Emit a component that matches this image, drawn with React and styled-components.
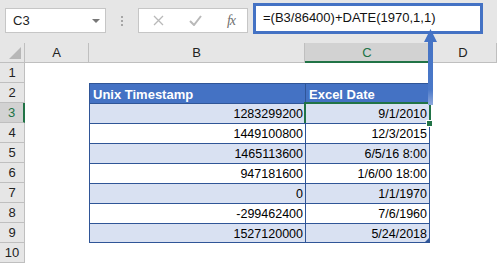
import React from "react";
import styled, { createGlobalStyle, css } from "styled-components";

const GlobalStyle = createGlobalStyle`
  body {
    margin: 0;
    background: #ffffff;
    font-family: "Liberation Sans", Arial, sans-serif;
    overflow: hidden;
  }
`;

const Page = styled.div`
  position: relative;
  width: 497px;
  height: 265px;
  overflow: hidden;
  background: #fff;
`;

const TopBar = styled.div`
  display: flex;
  align-items: flex-start;
  height: 43px;
  background: #e6e6e6;
`;

const NameBox = styled.div`
  display: flex;
  align-items: center;
  justify-content: space-between;
  box-sizing: border-box;
  width: 101px;
  height: 25px;
  margin: 8px 0 0 5px;
  padding: 0 5px 0 7px;
  background: #fff;
  border: 1px solid #c6c6c6;
  font-size: 13px;
  color: #222;
`;

const DropArrow = styled.span`
  width: 0;
  height: 0;
  border-left: 4px solid transparent;
  border-right: 4px solid transparent;
  border-top: 4px solid #777;
`;

const Dots = styled.div`
  display: flex;
  flex-direction: column;
  gap: 2px;
  margin: 16px 0 0 15px;
  span {
    width: 2px;
    height: 2px;
    background: #a6a6a6;
  }
`;

const FuncBox = styled.div`
  display: flex;
  align-items: center;
  justify-content: space-between;
  box-sizing: border-box;
  width: 110px;
  height: 25px;
  margin: 8px 0 0 15px;
  padding: 0 12px 0 14px;
  background: #fff;
  border: 1px solid #c6c6c6;
`;

const Fx = styled.span`
  font-family: "Liberation Serif", "Times New Roman", serif;
  font-style: italic;
  font-size: 14px;
  color: #6f6f6f;
  letter-spacing: -1px;
`;

const FormulaInput = styled.div`
  box-sizing: border-box;
  width: 230px;
  height: 31px;
  margin: 3px 0 0 5px;
  padding: 0 0 0 7px;
  background: #fff;
  border: 3px solid #4472c4;
  font-size: 13px;
  line-height: 24px;
  color: #111;
`;

const Sheet = styled.div`
  display: grid;
  grid-template-columns: 25px 64px 216px 125px 67px;
  grid-auto-rows: 20px;
`;

const ColHead = styled.div`
  position: relative;
  display: flex;
  align-items: center;
  justify-content: center;
  box-sizing: border-box;
  background: ${(p) => (p.$active ? "#d2d2d2" : "#e6e6e6")};
  border-right: 1px solid #bfbfbf;
  border-bottom: ${(p) => (p.$active ? "2px solid #217346" : "1px solid #bfbfbf")};
  color: ${(p) => (p.$active ? "#217346" : "#222")};
  font-size: 13px;
`;

const Corner = styled(ColHead)`
  &::after {
    content: "";
    position: absolute;
    right: 3px;
    bottom: 3px;
    width: 0;
    height: 0;
    border-left: 12px solid transparent;
    border-bottom: 12px solid #b7b7b7;
  }
`;

const RowHead = styled.div`
  display: flex;
  align-items: center;
  justify-content: center;
  box-sizing: border-box;
  background: ${(p) => (p.$active ? "#d2d2d2" : "#e6e6e6")};
  border-bottom: 1px solid #bfbfbf;
  border-right: ${(p) => (p.$active ? "2px solid #217346" : "1px solid #bfbfbf")};
  color: ${(p) => (p.$active ? "#217346" : "#222")};
  font-size: 13px;
`;

const Blank = styled.div`
  background: #fff;
`;

const Cell = styled.div`
  position: relative;
  display: flex;
  align-items: center;
  justify-content: ${(p) => (p.$head ? "flex-start" : "flex-end")};
  box-sizing: border-box;
  padding: ${(p) => (p.$head ? "1px 0 0 3px" : "1px 2px 0 0")};
  border-top: 1px solid #2f5597;
  border-left: 1px solid #2f5597;
  ${(p) => p.$lastCol && css`border-right: 1px solid #2f5597;`}
  ${(p) => p.$lastRow && css`border-bottom: 1px solid #2f5597;`}
  background: ${(p) => (p.$head ? "#4472c4" : p.$band ? "#d9e1f2" : "#fff")};
  color: ${(p) => (p.$head ? "#fff" : "#000")};
  font-weight: ${(p) => (p.$head ? 700 : 400)};
  font-size: ${(p) => (p.$head ? "13px" : "12.5px")};
  white-space: nowrap;
  ${(p) =>
    p.$selected &&
    css`
      &::after {
        content: "";
        position: absolute;
        left: -2px;
        top: -2px;
        right: -2px;
        bottom: -2px;
        border: 2px solid #217346;
      }
      &::before {
        content: "";
        position: absolute;
        right: -4px;
        bottom: -4px;
        width: 5px;
        height: 5px;
        background: #217346;
        border: 1px solid #fff;
        z-index: 2;
      }
    `}
  ${(p) =>
    p.$resize &&
    css`
      &::after {
        content: "";
        position: absolute;
        right: 0;
        bottom: 0;
        border-left: 4px solid transparent;
        border-bottom: 4px solid #2f5597;
      }
    `}
`;

const Arrow = styled.svg`
  position: absolute;
  left: 423px;
  top: 28px;
  pointer-events: none;
`;

const rows = [
  ["1283299200", "9/1/2010"],
  ["1449100800", "12/3/2015"],
  ["1465113600", "6/5/16 8:00"],
  ["947181600", "1/6/00 18:00"],
  ["0", "1/1/1970"],
  ["-299462400", "7/6/1960"],
  ["1527120000", "5/24/2018"],
];

export default function App() {
  return (
    <Page>
      <GlobalStyle />
      <TopBar>
        <NameBox>
          C3
          <DropArrow />
        </NameBox>
        <Dots>
          <span />
          <span />
          <span />
        </Dots>
        <FuncBox>
          <svg width="11" height="11" viewBox="0 0 11 11">
            <path d="M1 1 L10 10 M10 1 L1 10" stroke="#b9b9b9" strokeWidth="1.3" fill="none" />
          </svg>
          <svg width="13" height="11" viewBox="0 0 13 11">
            <path d="M1 6 L5 10 L12 1" stroke="#b9b9b9" strokeWidth="2" fill="none" />
          </svg>
          <Fx>fx</Fx>
        </FuncBox>
        <FormulaInput>=(B3/86400)+DATE(1970,1,1)</FormulaInput>
      </TopBar>

      <Sheet>
        <Corner />
        <ColHead>A</ColHead>
        <ColHead>B</ColHead>
        <ColHead $active>C</ColHead>
        <ColHead>D</ColHead>

        <RowHead>1</RowHead>
        <Blank />
        <Blank />
        <Blank />
        <Blank />

        <RowHead>2</RowHead>
        <Blank />
        <Cell $head>Unix Timestamp</Cell>
        <Cell $head $lastCol>Excel Date</Cell>
        <Blank />

        {rows.map(([ts, date], i) => {
          const last = i === rows.length - 1;
          const band = i % 2 === 0;
          return (
            <React.Fragment key={ts}>
              <RowHead $active={i === 0}>{i + 3}</RowHead>
              <Blank />
              <Cell $band={band} $lastRow={last}>
                {ts}
              </Cell>
              <Cell
                $band={band}
                $lastRow={last}
                $lastCol
                $selected={i === 0}
                $resize={last}
              >
                {date}
              </Cell>
              <Blank />
            </React.Fragment>
          );
        })}

        <RowHead>10</RowHead>
        <Blank />
        <Blank />
        <Blank />
        <Blank />
      </Sheet>

      <Arrow width="15" height="78" viewBox="0 0 15 78">
        <defs>
          <linearGradient id="shaft" x1="0" y1="0" x2="0" y2="1">
            <stop offset="0" stopColor="#4472c4" />
            <stop offset="0.8" stopColor="#4a78c8" />
            <stop offset="1" stopColor="#8fa9dc" />
          </linearGradient>
        </defs>
        <path d="M7.5 1 L14 14 L10 14 L10 77 L5 77 L5 14 L1 14 Z" fill="url(#shaft)" />
      </Arrow>
    </Page>
  );
}
